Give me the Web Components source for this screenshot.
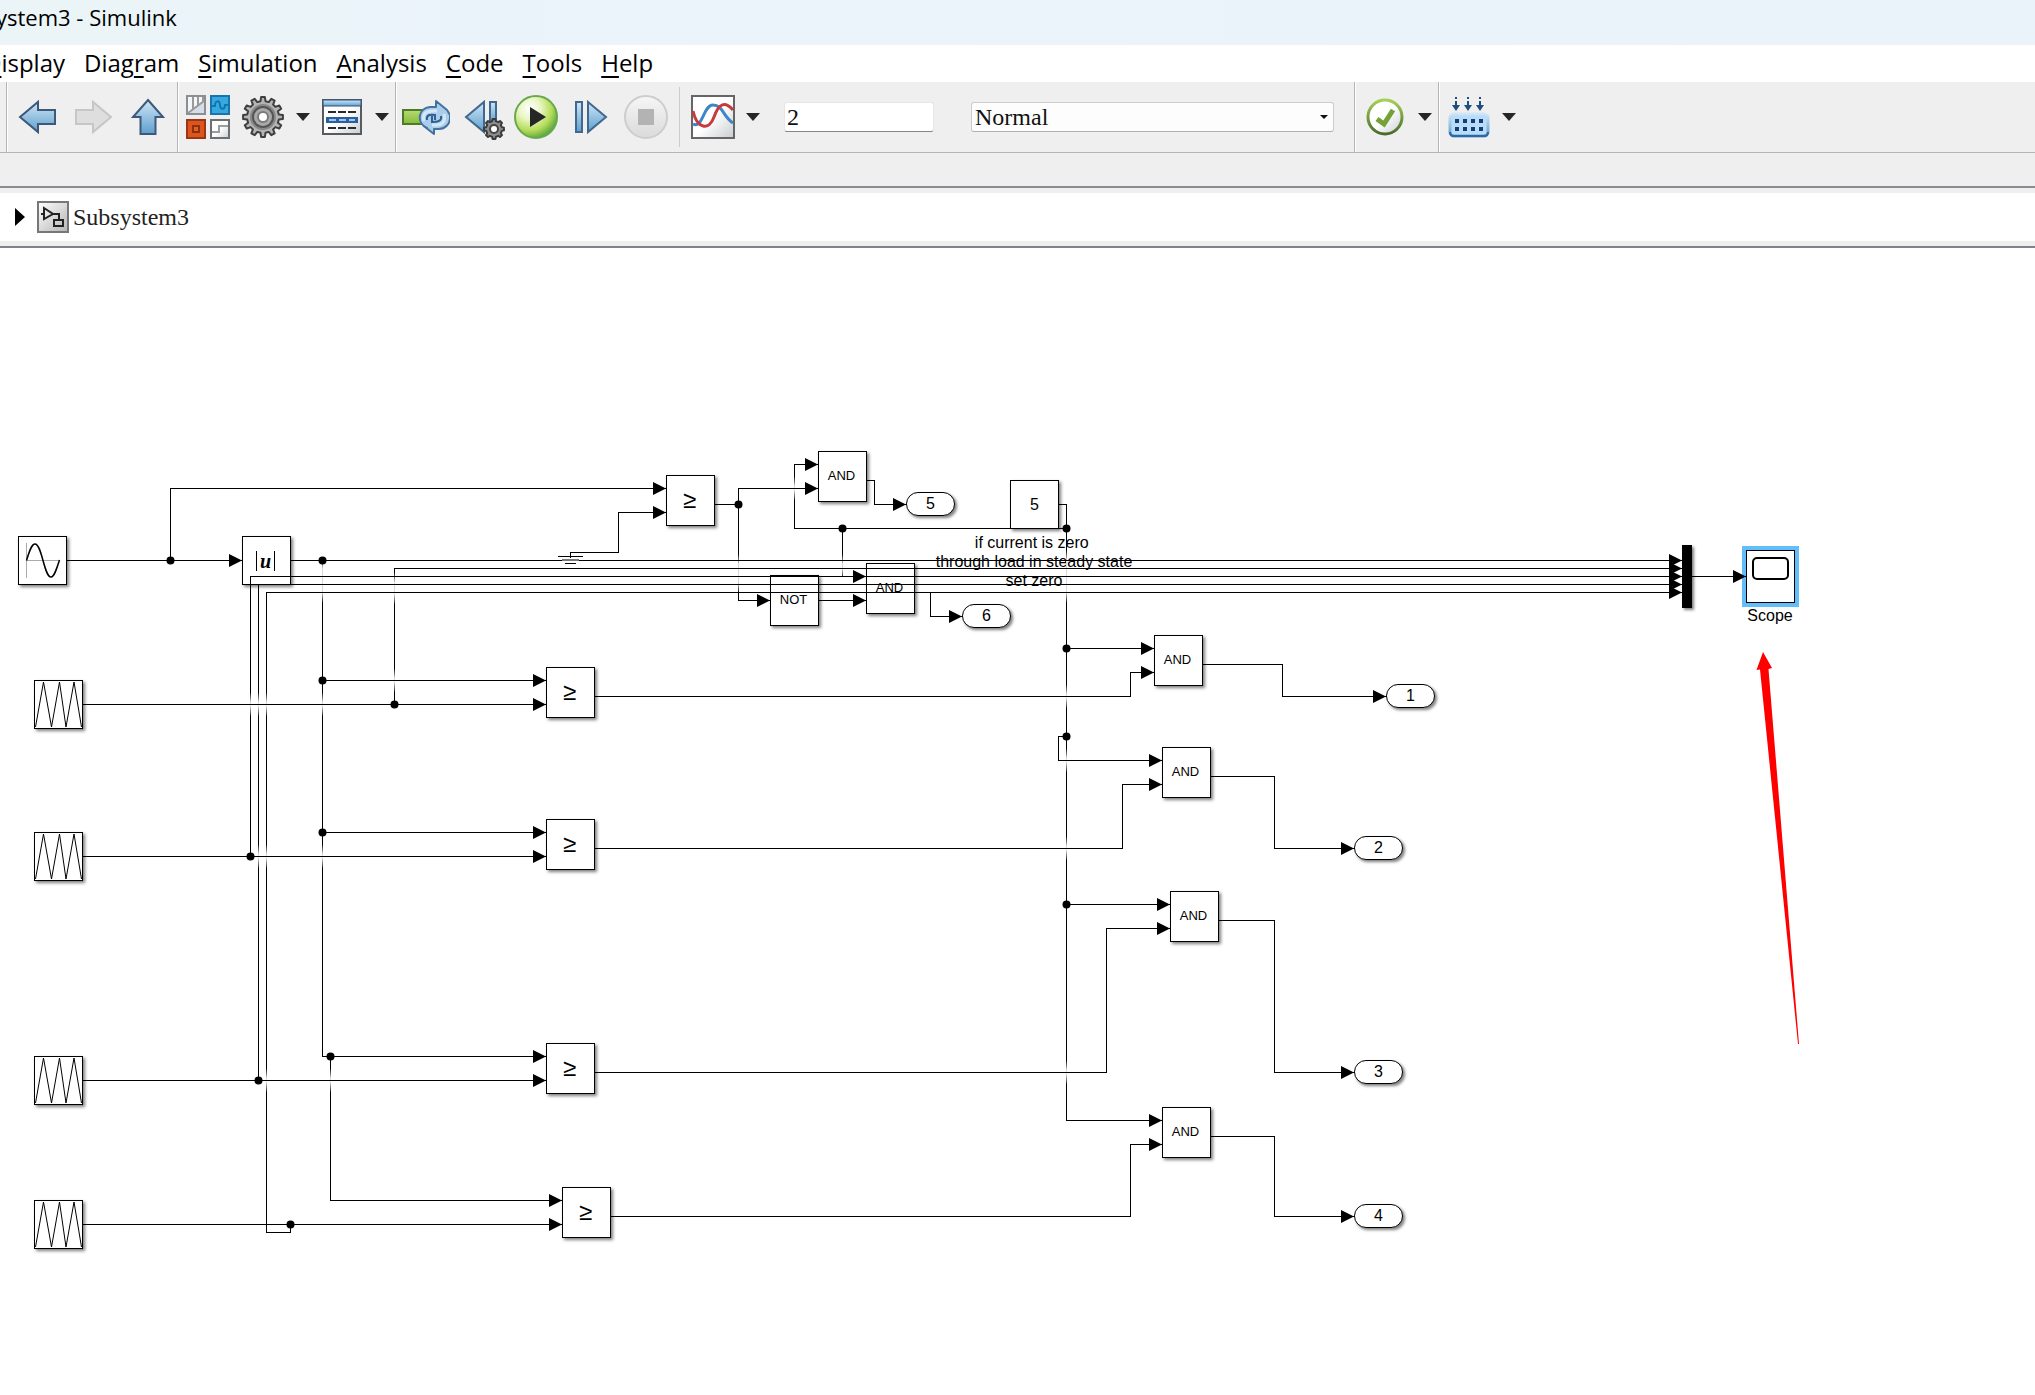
<!DOCTYPE html>
<html lang="en">
<head>
<meta charset="utf-8">
<title>Subsystem3 - Simulink</title>
<style>
  html, body { margin: 0; height: 100%; background: #fff; }
  body { font-family: "Open Sans", "Noto Sans", sans-serif; color: #000; }
</style>
</head>
<body>
<sim-window></sim-window>

<script>
/* ---------- shared helper ---------- */
const define = (name, css, html, setup) => {
  const tpl = document.createElement('template');
  tpl.innerHTML = `<style>${css}</style>${html}`;
  customElements.define(name, class extends HTMLElement {
    constructor() {
      super();
      this.attachShadow({ mode: 'open' }).append(tpl.content.cloneNode(true));
    }
    connectedCallback() { if (setup) setup(this, this.shadowRoot); }
  });
};

/* ---------- toolbar icons, each on a 48 x 48 grid ---------- */
const blue = `<linearGradient id="b" x1="0" y1="0" x2="0" y2="1"><stop offset="0" stop-color="#cfe6f6"/><stop offset="1" stop-color="#5f9fcd"/></linearGradient>`;
const grey = `<linearGradient id="g" x1="0" y1="0" x2="1" y2="1"><stop offset="0" stop-color="#fff"/><stop offset=".5" stop-color="#fff"/><stop offset="1" stop-color="#c9ccd0"/></linearGradient>`;
const cog = (cx, cy, r, n, tooth) => {
  let d = '';
  for (let i = 0; i < n; i++) {
    const p = (k, rad) => {
      const a = (i + k) * 2 * Math.PI / n;
      return (cx + rad * Math.sin(a)).toFixed(1) + ' ' + (cy - rad * Math.cos(a)).toFixed(1);
    };
    d += `${i ? 'L' : 'M'}${p(-.3, r - tooth)}L${p(-.18, r)}L${p(.18, r)}L${p(.3, r - tooth)}`;
  }
  return d + 'Z';
};
const ICONS = {
  back: blue + `<path d="M6 24 24 9V17H41V31H24V39Z" fill="url(#b)" stroke="#3c587a" stroke-width="2"/>`,
  forward: `<path d="M42 24 24 9V17H7V31H24V39Z" fill="#dedede" stroke="#c6c6c6" stroke-width="2"/>`,
  up: blue + `<path d="M24 7 39 24H31.500V41H16.500V24H9Z" fill="url(#b)" stroke="#3c587a" stroke-width="2"/>`,
  library: grey + `
    <rect x="3" y="3" width="18" height="18" fill="#f4f5f6" stroke="#8c8f92" stroke-width="2"/>
    <path d="M4 20 20 8V20Z" fill="#d5dee6"/>
    <path d="M9 4V16M14 4V12M19 4V8M4 20 20 8" stroke="#999" stroke-width="2" fill="none"/>
    <rect x="27" y="3" width="18" height="18" fill="#35a9e0" stroke="#1a74ac" stroke-width="2"/>
    <path d="M28 13H31C31 7 36 7 36 12S41 17 41 12H44" stroke="#1574ad" stroke-width="2" fill="none"/>
    <rect x="3" y="27" width="18" height="18" fill="#dc5520" stroke="#9c3510" stroke-width="2"/>
    <rect x="9" y="33" width="6" height="6" fill="#e0602a" stroke="#8f2f0b" stroke-width="2"/>
    <rect x="27" y="27" width="18" height="18" fill="url(#g)" stroke="#6d7073" stroke-width="2"/>
    <path d="M28 39H35V33H44" stroke="#9a9da0" stroke-width="2" fill="none"/>`,
  gear: `<path d="${cog(24, 24, 20, 12, 4)}" fill="#b4b4b4" stroke="#3f3f3f" stroke-width="2" stroke-linejoin="round"/>
    <circle cx="24" cy="24" r="13" fill="#888" /><circle cx="24" cy="24" r="11" fill="#555"/>
    <circle cx="24" cy="24" r="9" fill="#a9a9a9"/><circle cx="24" cy="24" r="6" fill="#7a7a7a"/><circle cx="24" cy="24" r="4" fill="#fff"/>`,
  explorer: grey + blue + `<rect x="5" y="7" width="38" height="34" fill="url(#g)" stroke="#585c61" stroke-width="2"/>
    <rect x="5" y="7" width="38" height="6" fill="url(#b)" stroke="#2c5278" stroke-width="1"/>
    <path d="M10 19H18M20 19H28M30 19H38M10 35H18M20 35H28M30 35H38" stroke="#2b2b2b" stroke-width="2"/>
    <rect x="8" y="24" width="32" height="6" fill="#2a5f9e"/>
    <path d="M11 27H18M21 27H28M31 27H37" stroke="#9cc5ec" stroke-width="2"/>`,
  update: blue + `<linearGradient id="l" x1="0" y1="0" x2="0" y2="1"><stop offset="0" stop-color="#b5dc70"/><stop offset="1" stop-color="#86bb3a"/></linearGradient>
    <rect x="1" y="17" width="24" height="14" fill="url(#l)" stroke="#4e7a27" stroke-width="2"/>
    <path d="M25 35C14 30 16 15 28 14H34V8L45 17 48 22C49 32 42 36 37 36H32V41L23 34Z" fill="#a9cdea" stroke="#44729f" stroke-width="2" stroke-linejoin="round"/>
    <path d="M22 28C20 21 24 18 30 18H35M42 21C44 29 40 32 34 32H30" fill="none" stroke="#d3e7f7" stroke-width="3"/>
    <path d="M25 27C24 22 28 21 33 22V27M39 23C40 28 36 29 30 29V23" fill="none" stroke="#2f5f94" stroke-width="2"/>`,
  stepback: blue + `<path d="M9 24 27 9V39Z" fill="url(#b)" stroke="#41688f" stroke-width="2"/>
    <path d="M33 9H39V30H33Z" fill="url(#b)" stroke="#41688f" stroke-width="2"/>
    <path d="${cog(37, 36, 10, 8, 2)}" fill="#8d8d8d" stroke="#3b3b3b" stroke-width="2" stroke-linejoin="round"/>
    <circle cx="37" cy="36" r="4" fill="#fff" stroke="#444" stroke-width="2"/>`,
  play: `<radialGradient id="p" cx=".35" cy=".3" r=".75"><stop offset="0" stop-color="#fff"/><stop offset=".35" stop-color="#e9f6c4"/><stop offset=".7" stop-color="#b4dc58"/><stop offset="1" stop-color="#52a03c"/></radialGradient>
    <circle cx="24" cy="24" r="21" fill="url(#p)" stroke="#6aa84f" stroke-width="2"/><path d="M18 14 34 24 18 34Z" fill="#262626"/>`,
  step: blue + `<path d="M9 9H15V39H9Z" fill="url(#b)" stroke="#41688f" stroke-width="2"/><path d="M21 9 39 24 21 39Z" fill="url(#b)" stroke="#41688f" stroke-width="2"/>`,
  stop: `<linearGradient id="s" x1="0" y1="0" x2="0" y2="1"><stop offset="0" stop-color="#f6f6f6"/><stop offset="1" stop-color="#dadada"/></linearGradient>
    <circle cx="24" cy="24" r="21" fill="url(#s)" stroke="#cdcdcd" stroke-width="2"/><rect x="16" y="16" width="16" height="16" fill="#b3b3b3"/>`,
  signal: grey + `<rect x="3" y="3" width="42" height="42" fill="url(#g)" stroke="#666" stroke-width="2"/>
    <path d="M4 31C14 36 14 12 24 12S34 24 44 30" fill="none" stroke="#3e86c8" stroke-width="3"/>
    <path d="M4 18C8 36 20 38 25 24S36 8 44 17" fill="none" stroke="#c83a3a" stroke-width="3"/>`,
  check: grey + `<linearGradient id="k" x1="0" y1="0" x2="0" y2="1"><stop offset="0" stop-color="#a5cf57"/><stop offset="1" stop-color="#4a6b2c"/></linearGradient>
    <circle cx="24" cy="24" r="17" fill="url(#g)" stroke="url(#k)" stroke-width="3"/><path d="M16 26 23 31 32 17" fill="none" stroke="#74a138" stroke-width="5"/>`,
  deploy: blue + `<path d="M11 4V6M11 8V14M23 4V6M23 8V14M35 4V6M35 8V14" stroke="#1d4e80" stroke-width="2"/>
    <path d="M7 12H15L11 18ZM19 12H27L23 18ZM31 12H39L35 18Z" fill="#1d4e80"/>
    <rect x="5" y="21" width="38" height="22" rx="4" fill="#b8dcfa" stroke="url(#b)" stroke-width="3"/>
    <path d="M5 39Q5 43 9 43H39Q43 43 43 39" fill="none" stroke="#2f689e" stroke-width="2"/>
    <path d="M10 28H14M18 28H22M26 28H30M34 28H38M10 36H14M18 36H22M26 36H30M34 36H38" stroke="#123f70" stroke-width="4"/>`
};

define('tool-button', `
  :host { display: block; flex: none; }
  button { display: block; width: 48px; height: 48px; padding: 0; border: 0; background: none; }
  svg { display: block; }
`, `<button type="button"></button>`, (el, root) => {
  const b = root.querySelector('button');
  b.setAttribute('aria-label', el.getAttribute('icon'));
  b.innerHTML = `<svg width="48" height="48" viewBox="0 0 48 48">${ICONS[el.getAttribute('icon')]}</svg>`;
});

define('menu-caret', `
  :host { display: block; flex: none; margin-left: 1px; }
  button { display: block; width: 16px; height: 48px; padding: 0; border: 0; background: none; }
  svg { display: block; }
`, `<button type="button" aria-label="more"><svg width="16" height="48" viewBox="0 0 16 48"><path d="M1 20H15L8 28Z" fill="#262626"/></svg></button>`);

define('tool-group', `
  :host { display: flex; align-items: center; gap: 7px; padding: 0 5px 0 6px; border-right: 1px solid #b4b4b4; box-shadow: 1px 0 #fff; }
  :host([plain]) { border: 0; box-shadow: none; }
`, `<slot></slot>`);

define('tool-bar', `
  :host { display: flex; height: 70px; background: #efefef; border-top: 1px solid #fff; border-bottom: 1px solid #b4b4b4; }
  .edge { width: 6px; margin-right: 1px; border-right: 1px solid #b4b4b4; box-shadow: 1px 0 #fff; }
  .thin { align-self: stretch; width: 1px; margin: 5px 2px; background: #ccc; }
  input, select { box-sizing: border-box; height: 30px; margin: 0; font: 24px/28px "Liberation Serif", serif; color: #111; border-radius: 3px; outline: 0; }
  input { width: 150px; margin-left: 16px; padding: 0 2px; background: #fff; border: 1px solid #e6e6e6; border-bottom-color: #868686; }
  .pick { display: grid; align-items: center; margin: 0 15px 0 30px; }
  .pick > * { grid-area: 1 / 1; }
  select { width: 363px; appearance: none; padding: 0 3px; background: #fdfdfd; border: 1px solid #ccc; border-bottom-color: #b0b0b0; }
  .pick svg { justify-self: end; margin-right: 6px; pointer-events: none; }
`, `
  <div class="edge"></div>
  <tool-group>
    <tool-button icon="back"></tool-button><tool-button icon="forward"></tool-button><tool-button icon="up"></tool-button>
  </tool-group>
  <tool-group>
    <tool-button icon="library"></tool-button><tool-button icon="gear"></tool-button><menu-caret></menu-caret>
    <tool-button icon="explorer"></tool-button><menu-caret></menu-caret>
  </tool-group>
  <tool-group>
    <tool-button icon="update"></tool-button><tool-button icon="stepback"></tool-button><tool-button icon="play"></tool-button>
    <tool-button icon="step"></tool-button><tool-button icon="stop"></tool-button>
    <div class="thin"></div>
    <tool-button icon="signal"></tool-button><menu-caret></menu-caret>
    <input type="text" value="2" aria-label="Simulation stop time">
    <div class="pick">
      <select aria-label="Simulation mode"><option>Normal</option></select>
      <svg width="8" height="8" viewBox="0 0 8 8"><path d="M0 2H8L4 6Z" fill="#111"/></svg>
    </div>
  </tool-group>
  <tool-group>
    <tool-button icon="check"></tool-button><menu-caret></menu-caret>
  </tool-group>
  <tool-group plain>
    <tool-button icon="deploy"></tool-button><menu-caret></menu-caret>
  </tool-group>`);

define('title-bar', `
  :host { display: block; height: 45px; overflow: hidden; background: linear-gradient(90deg, #ebf5f7, #ebf3fb 30%, #ebf3fa); }
  span { display: block; margin-left: -4px; font-size: 22px; line-height: 34px; white-space: nowrap; }
`, `<span><slot></slot></span>`);

define('menu-bar', `
  :host { display: flex; gap: 19px; height: 36px; margin-left: -16px; background: #fff; }
  button { padding: 0; border: 0; background: none; color: #000; font: 24px/36px "Open Sans", "Noto Sans", sans-serif; white-space: nowrap; }
  u { text-decoration-thickness: 2px; text-underline-offset: 4px; text-decoration-skip-ink: none; }
`, `
  <button><u>D</u>isplay</button><button>Diag<u>r</u>am</button><button><u>S</u>imulation</button>
  <button><u>A</u>nalysis</button><button><u>C</u>ode</button><button><u>T</u>ools</button><button><u>H</u>elp</button>`);

define('path-bar', `
  :host { display: block; padding-top: 33px; background: #efefef; }
  nav { display: flex; align-items: center; gap: 12px; height: 48px; padding-left: 15px; background: #fff; border: solid #efefef; border-width: 5px 0; box-shadow: 0 -2px #8b8b91, 0 2px #7f8090; margin: 2px 0; }
  a { display: flex; align-items: center; gap: 4px; color: #222; text-decoration: none; font: 24px/28px "Liberation Serif", serif; }
`, `<nav>
    <svg width="10" height="18" viewBox="0 0 10 18"><path d="M0 0 10 9 0 18Z" fill="#000"/></svg>
    <a href="#subsystem3"><svg width="32" height="32" viewBox="0 0 32 32">
      <linearGradient id="n" x1="0" y1="0" x2="1" y2="1"><stop offset="0" stop-color="#fff"/><stop offset="1" stop-color="#b5b5b5"/></linearGradient>
      <rect x="1" y="1" width="30" height="30" fill="url(#n)" stroke="#777" stroke-width="2"/>
      <path d="M7 7 16 13 7 18ZM4 13H7M16 13H22V19M17 19H26V25H17Z" fill="none" stroke="#222" stroke-width="2"/>
    </svg><slot></slot></a>
  </nav>`);

/* ---------- diagram ---------- */
const SCROLL_Y = 248; // model coordinates hidden above the visible part of the canvas

const GLYPHS = {
  sine: `<svg viewBox="0 0 47 47"><path d="M7.500 6V41M7.500 23.500H41" stroke="#aaa" fill="none"/><path d="M7.500 23.500C11 12 13 7 16 7 23 7 25 40 32 40 35 40 37 34 40.500 23" stroke="#000" stroke-width="1.500" fill="none"/></svg>`,
  saw: `<svg viewBox="0 0 47 47"><path d="M.500 46 8.500 1 16.500 46 24.500 1 31 46 39 1 46.500 46" stroke="#000" fill="none"/></svg>`,
  screen: `<svg viewBox="0 0 47 51"><rect x="6" y="7" width="35" height="21" rx="4" stroke="#000" stroke-width="2" fill="#fff"/></svg>`
};

define('sim-block', `
  :host { position: absolute; box-sizing: border-box; display: flex; align-items: center; justify-content: center;
    width: 49px; height: 51px; border: 1px solid #000; background: #fff; box-shadow: 2px 2px 3px rgba(0,0,0,.5);
    font: 13px/16px "Liberation Sans", Arial, sans-serif; }
  :host([kind="gate"]) { padding: 0 2px 2px 0; }
  :host([kind="rel"]) { font-size: 24px; line-height: 24px; padding: 0 2px 2px 0; }
  :host([kind="const"]), :host([kind="abs"]), :host([kind="sine"]), :host([kind="saw"]) { height: 49px; }
  :host([kind="const"]), :host([kind="port"]) { font-size: 16px; }
  :host([kind="abs"]) { font: italic bold 20px/20px "Liberation Serif", serif; padding: 0 2px 0 0; }
  :host([kind="abs"]) span { padding: 0 3px; border: solid #000; border-width: 0 1px; }
  :host([kind="port"]) { height: 24px; border-radius: 12px; }
  :host([kind="mux"]) { width: 10px; height: 63px; background: #000; }
  :host([kind="screen"]) { height: 53px; box-shadow: 0 0 0 4px #62befb; }
  svg { display: block; width: 100%; height: 100%; }
  .art { width: 100%; height: 100%; }
`, `<span><slot></slot></span>`, (el, root) => {
  el.style.left = el.getAttribute('x') + 'px';
  el.style.top = (el.getAttribute('y') - SCROLL_Y) + 'px';
  const g = GLYPHS[el.getAttribute('kind')];
  if (g) {
    const s = root.querySelector('span');
    s.className = 'art';
    s.innerHTML = g;
  }
});

define('sim-note', `
  :host { position: absolute; transform: translateX(-50%); font: 16px/19px "Liberation Sans", Arial, sans-serif; text-align: center; white-space: nowrap; width: max-content; }
`, `<slot></slot>`, el => {
  el.style.left = el.getAttribute('x') + 'px';
  el.style.top = (el.getAttribute('y') - SCROLL_Y) + 'px';
});

// Signal lines as point lists; a line that ends in '>' carries an arrowhead.
const WIRES = `67,560 242,560 >|170,560 170,488 666,488 >|291,560 1682,560 >|394,704 394,568 1682,568 >
250,856 250,576 1682,576 >|258,1080 258,584 1682,584 >|290,1224 290,1232 266,1232 266,592 1682,592 >
322,560 322,1056 330,1056|322,680 546,680 >|322,832 546,832 >|330,1056 546,1056 >|330,1056 330,1200 562,1200 >
83,704 546,704 >|83,856 546,856 >|83,1080 546,1080 >|83,1224 562,1224 >
570,557 570,552 618,552 618,512 666,512 >|715,504 738,504|738,504 738,488 818,488 >|738,504 738,600 770,600 >
1066,528 794,528 794,464 818,464 >|842,528 842,576 866,576 >|867,480 874,480 874,504 906,504 >|819,600 866,600 >
930,592 930,616 962,616 >|1059,504 1066,504 1066,1120 1162,1120 >|1066,648 1154,648 >|1066,736 1058,736 1058,760 1162,760 >
1066,904 1170,904 >|595,696 1130,696 1130,672 1154,672 >|595,848 1122,848 1122,784 1162,784 >
595,1072 1106,1072 1106,928 1170,928 >|611,1216 1130,1216 1130,1144 1162,1144 >|1203,664 1282,664 1282,696 1386,696 >
1211,776 1274,776 1274,848 1354,848 >|1219,920 1274,920 1274,1072 1354,1072 >|1211,1136 1274,1136 1274,1216 1354,1216 >
1692,576 1746,576 >`.split(/[|\n]/);
const DOTS = [[170,560],[322,560],[322,680],[322,832],[330,1056],[394,704],[250,856],[258,1080],[290,1224],[738,504],[842,528],[1066,528],[1066,648],[1066,736],[1066,904]];
// Stretches (x, first y, last y) where a vertical line fades out to pass under horizontal ones.
const CROSSINGS = [[250,704,704],[258,704,704],[266,704,704],[258,856,856],[266,856,856],[266,1080,1080],
  [322,570,590],[322,704,704],[322,856,856],[394,584,592],[394,680,680],[330,1080,1080],
  [738,566,580],[794,488,488],[842,566,566],
  [1066,562,590],[1066,696,696],[1066,760,760],[1066,848,848],[1066,1072,1072]];

define('sim-wires', `
  :host { position: absolute; inset: 0; pointer-events: none; }
  svg { display: block; width: 100%; height: 100%; }
`, `<svg></svg>`, (el, root) => {
  let vert = '', horiz = '', heads = '';
  for (const w of WIRES) {
    const arrow = w.includes('>');
    const pts = w.replace('>', '').trim().split(' ').map(p => p.split(',').map(Number));
    for (let i = 1; i < pts.length; i++) {
      const [a, b] = pts[i - 1], [c, d] = pts[i];
      if (a === c) vert += `<rect x="${a}" y="${Math.min(b, d)}" width="1" height="${Math.abs(d - b) + 1}"/>`;
      else horiz += `<rect x="${Math.min(a, c)}" y="${b}" width="${Math.abs(c - a) + 1}" height="1"/>`;
    }
    if (arrow) {
      const [x, y] = pts[pts.length - 1];
      heads += `<path d="M${x} ${y + .5}l-13 -6.500v13z"/>`;
    }
  }
  const fades = CROSSINGS.map(([x, a, b]) => `<rect x="${x}" y="${a - 12}" width="1" height="11" fill="url(#in)"/>
    <rect x="${x}" y="${a - 1}" width="1" height="${b - a + 3}" fill="#fff" fill-opacity=".85"/>
    <rect x="${x}" y="${b + 2}" width="1" height="11" fill="url(#out)"/>`).join('');
  const dots = DOTS.map(([x, y]) => `<circle cx="${x + .5}" cy="${y + .5}" r="4"/>`).join('');
  root.querySelector('svg').innerHTML = `
    <linearGradient id="in" x1="0" y1="0" x2="0" y2="1"><stop offset="0" stop-color="#fff" stop-opacity="0"/><stop offset="1" stop-color="#fff" stop-opacity=".9"/></linearGradient>
    <linearGradient id="out" x1="0" y1="0" x2="0" y2="1"><stop offset="0" stop-color="#fff" stop-opacity=".9"/><stop offset="1" stop-color="#fff" stop-opacity="0"/></linearGradient>
    <g transform="translate(0 ${-SCROLL_Y})">
      ${vert}${fades}${horiz}${heads}${dots}
      <path d="M558 556.500H583" stroke="#000" stroke-width="1"/><path d="M562 560H579" stroke="#777" stroke-width="2"/><path d="M565 563.500H576" stroke="#000"/>
      <path d="M1763 652 1772 668 1768.500 669 1799 1044H1798L1760 669.500 1756.500 670Z" fill="#f00"/>
    </g>`;
});

define('sim-canvas', `
  :host { display: block; position: relative; flex: 1; overflow: hidden; background: #fff; }
`, `
  <sim-block kind="sine" x="18" y="536"></sim-block>
  <sim-block kind="abs" x="242" y="536">u</sim-block>
  <sim-block kind="saw" x="34" y="680"></sim-block>
  <sim-block kind="saw" x="34" y="832"></sim-block>
  <sim-block kind="saw" x="34" y="1056"></sim-block>
  <sim-block kind="saw" x="34" y="1200"></sim-block>
  <sim-block kind="rel" x="666" y="475">≥</sim-block>
  <sim-block kind="rel" x="546" y="667">≥</sim-block>
  <sim-block kind="rel" x="546" y="819">≥</sim-block>
  <sim-block kind="rel" x="546" y="1043">≥</sim-block>
  <sim-block kind="rel" x="562" y="1187">≥</sim-block>
  <sim-block kind="gate" x="818" y="451">AND</sim-block>
  <sim-block kind="gate" x="770" y="575">NOT</sim-block>
  <sim-block kind="gate" x="866" y="563">AND</sim-block>
  <sim-block kind="gate" x="1154" y="635">AND</sim-block>
  <sim-block kind="gate" x="1162" y="747">AND</sim-block>
  <sim-block kind="gate" x="1170" y="891">AND</sim-block>
  <sim-block kind="gate" x="1162" y="1107">AND</sim-block>
  <sim-block kind="const" x="1010" y="480">5</sim-block>
  <sim-block kind="port" x="906" y="492">5</sim-block>
  <sim-block kind="port" x="962" y="604">6</sim-block>
  <sim-block kind="port" x="1386" y="684">1</sim-block>
  <sim-block kind="port" x="1354" y="836">2</sim-block>
  <sim-block kind="port" x="1354" y="1060">3</sim-block>
  <sim-block kind="port" x="1354" y="1204">4</sim-block>
  <sim-block kind="mux" x="1682" y="545"></sim-block>
  <sim-block kind="screen" x="1746" y="550"></sim-block>
  <sim-note x="1034" y="533">if current is zero&nbsp;<br>through load in steady state<br>set zero</sim-note>
  <sim-note x="1770" y="606">Scope</sim-note>
  <sim-wires></sim-wires>`);

define('sim-window', `
  :host { display: flex; flex-direction: column; min-height: 100%; height: 100vh; overflow: hidden; }
  title-bar, menu-bar, tool-bar, path-bar { flex: none; }
`, `
  <title-bar>ystem3 - Simulink</title-bar>
  <menu-bar></menu-bar>
  <tool-bar></tool-bar>
  <path-bar>Subsystem3</path-bar>
  <sim-canvas></sim-canvas>`);
</script>
</body>
</html>
